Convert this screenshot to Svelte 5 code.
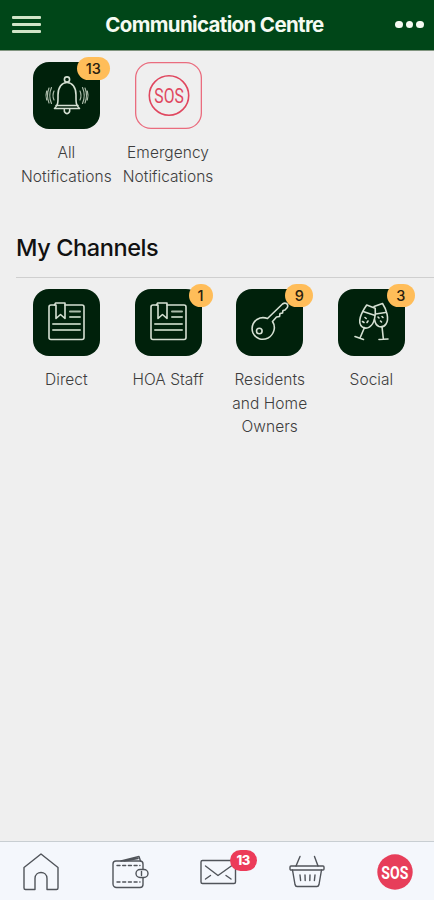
<script>
	const alerts = [
		{ label: "All Notifications", icon: "bell", count: 13, size: "wide" },
		{ label: "Emergency Notifications", icon: "sos", count: 0 },
	];

	const channels = [
		{ label: "Direct", icon: "notes", count: 0 },
		{ label: "HOA Staff", icon: "notes", count: 1, size: "small" },
		{ label: "Residents and Home Owners", icon: "key", count: 9 },
		{ label: "Social", icon: "glasses", count: 3 },
	];

	const unread = 13;
</script>

{#snippet tile(item)}
	<button class="item">
		<span class="tile" class:outline={item.icon === "sos"}>
			<svg viewBox="0 0 67 67" width="67" height="67">
				{#if item.icon === "bell"}
					<path d="M21.5 46.500c4-4 3.500-6.500 3.500-13.500 0-8 4-12.500 9-12.500s9 4.500 9 12.500c0 7-.5 9.500 3.500 13.500zM23 43.500h22" />
					<circle cx="34" cy="17.500" r="2.600" />
					<path d="M31.300 47.500c-.5 5.500 5.900 5.500 5.400 0" />
					<g class="waves">
						<path d="M21 29q-2 4.500 0 9M18.500 25.500q-3.500 8 0 16M16 26q-3 7.500 0 15M13.700 29q-1.500 4.500 0 9M47 29q2 4.500 0 9M49.500 25.500q3.500 8 0 16M52 26q3 7.500 0 15M54.300 29q1.500 4.500 0 9" />
					</g>
				{:else if item.icon === "sos"}
					<circle cx="34" cy="33.500" r="19.700" />
					<text x="19.300" y="40.500" textLength="29.500" lengthAdjust="spacingAndGlyphs">SOS</text>
				{:else if item.icon === "notes"}
					<path d="M21.500 16H18a2 2 0 0 0-2 2v30.500a2 2 0 0 0 2 2h31a2 2 0 0 0 2-2V18a2 2 0 0 0-2-2H32" />
					<path d="M21.500 16l1-2H32v15.500l-4.500-4-4.500 4V16h-1.500" />
					<g class="rules">
						<path d="M37 22.500h10M37 28h10M20 35h27M20 41h27" />
					</g>
				{:else if item.icon === "key"}
					<path d="M31.500 29.500L46.500 15q2-1.500 4-.5 2 1.500.8 4L49 21l-2 .5-.5 2.500-2.500.5-.5 3-3 .5-4 4.500c4 6 1 13.500-4.500 16.500-6 3-12.500.5-15-5-2.500-6.500.5-13 7-15 2.500-.700 5-.500 7.500.5z" />
					<circle cx="23.300" cy="42" r="2.800" />
				{:else}
					<path d="M28.700 16l8.500 3.200c.8 7-1 16-5.500 18.600-2.500 1.700-5.500 1.500-7.500 0-5.500-4-1-14 4.500-21.800z" />
					<path d="M25 22.500l11.500 3.700M26.500 38.500L22 49M17 47.500l8.500 3" />
					<path d="M36 17.500l8.500-3c4 6 7 15.500 3.500 20.500-1.500 2.300-4.300 3.300-7 2.500-2.500-1-4-4-4.500-7" />
					<path d="M37.500 25l10-1.500M44 37.500l1.300 12M41 50.500l9-.5" />
					<path d="M27 28.500l1.200 1M24.500 32.500l1.500 1M30 32l-1 1.500M40 28l1 1M44 27.500l1 1M42.500 32l1 1" />
				{/if}
			</svg>
			{#if item.count}
				<span class="badge {item.size}">{item.count}</span>
			{/if}
		</span>
		<span class="label">{item.label}</span>
	</button>
{/snippet}

<div class="screen">
	<header>
		<button class="menu" aria-label="Menu">
			<span></span>
			<span></span>
			<span></span>
		</button>
		<h1>Communication Centre</h1>
		<button class="more" aria-label="More">
			<span></span>
			<span></span>
			<span></span>
		</button>
	</header>

	<main>
		<section class="grid alerts">
			{#each alerts as item}
				{@render tile(item)}
			{/each}
		</section>

		<h2>My Channels</h2>

		<section class="grid">
			{#each channels as item}
				{@render tile(item)}
			{/each}
		</section>
	</main>

	<nav>
		<button aria-label="Home">
			<svg viewBox="0 0 40 40" width="40" height="40">
				<path d="M3 15.500L20 2l17 13.500V36a1.500 1.500 0 0 1-1.500 1.500H26V26.500c0-8-12-8-12 0v11H4.500A1.500 1.500 0 0 1 3 36z" />
			</svg>
		</button>
		<button aria-label="Wallet">
			<svg viewBox="0 0 40 40" width="40" height="40">
				<path d="M33 17v-5a3 3 0 0 0-3-3H6a3 3 0 0 0-3 3v20a3.500 3.500 0 0 0 3.500 3.500H30a3 3 0 0 0 3-3V26" />
				<path d="M11 9l18-4.500L30.500 9M14 9l14-2.500" />
				<path d="M30 17.500h4a4 4 0 0 1 0 8h-4a4 4 0 0 1 0-8z" />
				<path d="M31.500 19.500v4" />
				<path d="M7 13.500h23M7 30h23" class="stitch" />
			</svg>
		</button>
		<button aria-label="Messages">
			<svg viewBox="0 0 40 40" width="40" height="40">
				<rect x="3" y="8.500" width="34.500" height="23" rx="1.500" />
				<path d="M7.500 14L20 23.500 34 13.500M7.500 27l5-3.500M28 23.500l5 3.500" />
			</svg>
			<span class="unread">{unread}</span>
		</button>
		<button aria-label="Shop">
			<svg viewBox="0 0 40 40" width="40" height="40">
				<path d="M4 14h32a1 1 0 0 1 1 1v2a1 1 0 0 1-1 1H4a1 1 0 0 1-1-1v-2a1 1 0 0 1 1-1z" />
				<path d="M5.500 18L8 32.500q.5 2 2 2h20q1.500 0 2-2L34.500 18M9 14l4-9.500M31 14L27.500 4.500" />
				<path d="M13 23l.6 5.500M18 23l.2 5.500M23 23l-.2 5.500M28 23l-.6 5.500" />
			</svg>
		</button>
		<button aria-label="SOS">
			<svg viewBox="0 0 40 40" width="40" height="40" class="alarm">
				<circle cx="20" cy="20" r="17.700" />
				<text x="6.300" y="26.500" textLength="27" lengthAdjust="spacingAndGlyphs">SOS</text>
			</svg>
		</button>
	</nav>
</div>

<style>
	:global(body) {
		background: #efefef;
	}

	.screen {
		display: flex;
		flex-direction: column;
		height: 100vh;
		overflow: hidden;
		box-sizing: border-box;
		background: #efefef;
		font-family: Inter, "Liberation Sans", sans-serif;
	}

	button {
		padding: 0;
		border: none;
		background: none;
		font: inherit;
		color: inherit;
	}

	svg {
		display: block;
		fill: none;
		stroke-linecap: round;
		stroke-linejoin: round;
	}

	header {
		display: grid;
		grid-template-columns: 29px 1fr 29px;
		align-items: center;
		flex: none;
		height: 51px;
		padding: 0 10px 1px 12px;
		box-sizing: border-box;
		background: #004618;
		border-bottom: 1px solid #819580;
	}

	.menu {
		display: flex;
		flex-direction: column;
		gap: 4px;
		width: 29px;
	}

	.menu span {
		height: 3px;
		background: #d0e4c7;
		border-radius: 1px;
	}

	h1 {
		margin: 0;
		padding-right: 7px;
		font-size: 20.5px;
		font-weight: 700;
		line-height: 26px;
		letter-spacing: -0.65px;
		text-align: center;
		color: #f5faf2;
		white-space: nowrap;
	}

	.more {
		display: flex;
		gap: 3px;
	}

	.more span {
		width: 7.500px;
		height: 7.500px;
		border-radius: 50%;
		background: #f5faf2;
	}

	main {
		flex: 1;
		padding-top: 11px;
	}

	.grid {
		display: grid;
		grid-template-columns: repeat(4, 101.700px);
		padding-left: 15.500px;
	}

	.alerts {
		height: 169px;
	}

	.item {
		display: flex;
		flex-direction: column;
		align-items: center;
		justify-content: flex-start;
	}

	.tile {
		position: relative;
		width: 67px;
		height: 67px;
		border-radius: 16px;
		background: #00210b;
	}

	.tile svg {
		stroke: #d5e0d3;
		stroke-width: 1.6;
	}

	.waves {
		stroke: #a9baa8;
		stroke-width: 1.2;
	}

	.rules {
		stroke: #a9bba9;
		stroke-width: 2;
	}

	.outline {
		background: none;
		box-shadow: inset 0 0 0 1.300px #ea6c7e;
	}

	.outline svg {
		stroke: #e0475f;
	}

	.outline text {
		font: 20px Roboto, sans-serif;
		fill: #e0475f;
		stroke: none;
	}

	.badge {
		position: absolute;
		top: -5px;
		left: 49px;
		width: 28px;
		height: 23px;
		border-radius: 12px;
		background: #ffbd59;
		color: #29200f;
		font-size: 14.500px;
		font-weight: 500;
		line-height: 23px;
		text-align: center;
	}

	.badge.wide {
		left: 44px;
		width: 33px;
	}

	.badge.small {
		left: 54px;
		width: 24px;
	}

	.label {
		width: 96px;
		margin-top: 12px;
		font-size: 15.500px;
		font-weight: 300;
		line-height: 23.500px;
		letter-spacing: 0.05px;
		text-align: center;
		color: #3d3d3d;
	}

	h2 {
		margin: 0 0 11px 16px;
		height: 47px;
		box-sizing: border-box;
		border-bottom: 1px solid #cfcfcf;
		font-size: 23.500px;
		font-weight: 500;
		line-height: 34px;
		letter-spacing: -0.4px;
		color: #111;
	}

	nav {
		display: grid;
		grid-template-columns: repeat(5, 88.500px);
		justify-content: center;
		flex: none;
		height: 59px;
		padding-left: 2px;
		box-sizing: border-box;
		border-top: 1px solid #c8ced2;
		background: #f4f7fc;
	}

	nav button {
		position: relative;
		display: flex;
		align-items: center;
		justify-content: center;
		padding-top: 2px;
	}

	nav svg {
		stroke: #50545a;
		stroke-width: 1.4;
	}

	.stitch {
		stroke-dasharray: 3 2.700;
	}

	.unread {
		position: absolute;
		top: 8px;
		left: 56px;
		width: 27px;
		height: 21px;
		border-radius: 11px;
		background: #ec3b59;
		color: #fff;
		font-size: 13px;
		font-weight: 800;
		line-height: 21px;
		letter-spacing: -0.5px;
		text-align: center;
	}

	.alarm circle {
		fill: #e73e5a;
		stroke: none;
	}

	.alarm text {
		font: 700 18px Roboto, sans-serif;
		fill: #fff;
		stroke: none;
	}
</style>
